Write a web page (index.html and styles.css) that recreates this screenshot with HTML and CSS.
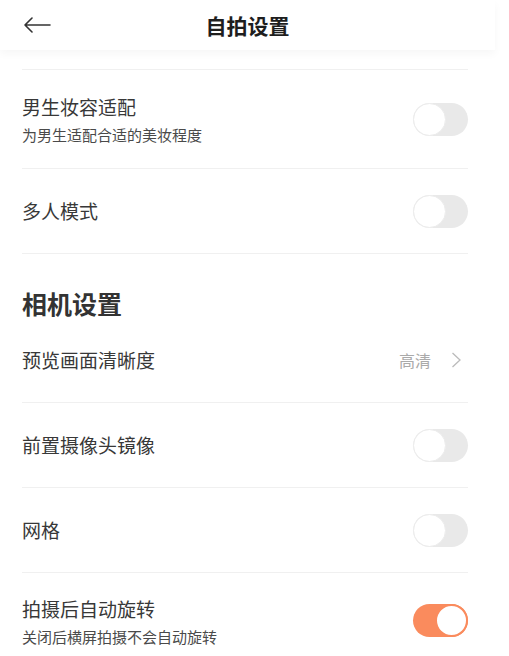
FILE: index.html
```html
<!DOCTYPE html>
<html lang="zh-CN">
<head>
<meta charset="utf-8">
<link rel="stylesheet" href="styles.css">
</head>
<body>
<div class="page">
  <header class="topbar">
    <span class="back">
      <svg width="28" height="16" viewBox="0 0 28 16"><path d="M27 8H2M9 1L2 8l7 7" fill="none" stroke="#333" stroke-width="1.6" stroke-linecap="round" stroke-linejoin="round"/></svg>
    </span>
    <h1 class="title">自拍设置</h1>
  </header>
  <div class="list">
    <div class="row cut"></div>
    <div class="row two">
      <div class="texts">
        <div class="label">男生妆容适配</div>
        <div class="sub">为男生适配合适的美妆程度</div>
      </div>
      <span class="switch"><span class="knob"></span></span>
    </div>
    <div class="row">
      <div class="label">多人模式</div>
      <span class="switch"><span class="knob"></span></span>
    </div>
    <div class="section">相机设置</div>
    <div class="row">
      <div class="label">预览画面清晰度</div>
      <div class="value">高清
        <svg class="chev" width="11" height="16" viewBox="0 0 11 16"><path d="M1.5 1l7.5 7-7.5 7" fill="none" stroke="#bbb" stroke-width="1.3"/></svg>
      </div>
    </div>
    <div class="row">
      <div class="label">前置摄像头镜像</div>
      <span class="switch"><span class="knob"></span></span>
    </div>
    <div class="row">
      <div class="label">网格</div>
      <span class="switch"><span class="knob"></span></span>
    </div>
    <div class="row two last">
      <div class="texts">
        <div class="label">拍摄后自动旋转</div>
        <div class="sub">关闭后横屏拍摄不会自动旋转</div>
      </div>
      <span class="switch on"><span class="knob"></span></span>
    </div>
  </div>
</div>
</body>
</html>
```
FILE: styles.css
```css
* { box-sizing: border-box; }
html, body { margin: 0; padding: 0; background: #fff; }
body {
  font-family: "Noto Sans CJK SC", "Noto Sans", sans-serif;
  color: #333;
}
.page { width: 509px; height: 656px; overflow: hidden; position: relative; }
.topbar {
  width: 495px;
  height: 50px;
  display: flex;
  align-items: center;
  justify-content: center;
  position: relative;
  background: #fff;
  box-shadow: 0 4px 8px rgba(0,0,0,0.035);
  z-index: 2;
}
.back { position: absolute; left: 23px; top: 17px; display: flex; }
.title {
  margin: 0;
  font-size: 21px;
  font-weight: 700;
  color: #1e1e1e;
  line-height: 1;
  padding-left: 0;
}
.list { padding: 0 41px 0 22px; }
.row {
  display: flex;
  align-items: center;
  justify-content: space-between;
  height: 85px;
  border-bottom: 1px solid #f0f0f0;
}
.row.cut { height: 20px; }
.row.two { height: 99px; align-items: center; }
.row.last { border-bottom: none; padding-bottom: 4px; }
.texts { display: flex; flex-direction: column; }
.row.two .texts { padding-top: 1px; }
.label { font-size: 19px; line-height: 26px; color: #383838; }
.sub { font-size: 15px; line-height: 20px; color: #4a4a4a; margin-top: 5px; }
.section {
  height: 64px;
  padding-top: 34px;
  font-size: 25px;
  line-height: 30px;
  font-weight: 700;
  color: #333;
}
.value {
  display: flex;
  align-items: center;
  font-size: 16px;
  color: #aaa;
  gap: 20px;
  margin-right: 6px;
}
.switch {
  width: 55px;
  height: 33px;
  border-radius: 17px;
  background: #e9e9e9;
  position: relative;
  flex: none;
}
.knob {
  position: absolute;
  left: 0; top: 0;
  width: 33px; height: 33px;
  border-radius: 50%;
  background: #fff;
  border: 1px solid #ececec;
}
.switch.on { background: #fa8b5d; }
.switch.on .knob { left: auto; right: 0; border: 2px solid #fa8b5d; }
```
